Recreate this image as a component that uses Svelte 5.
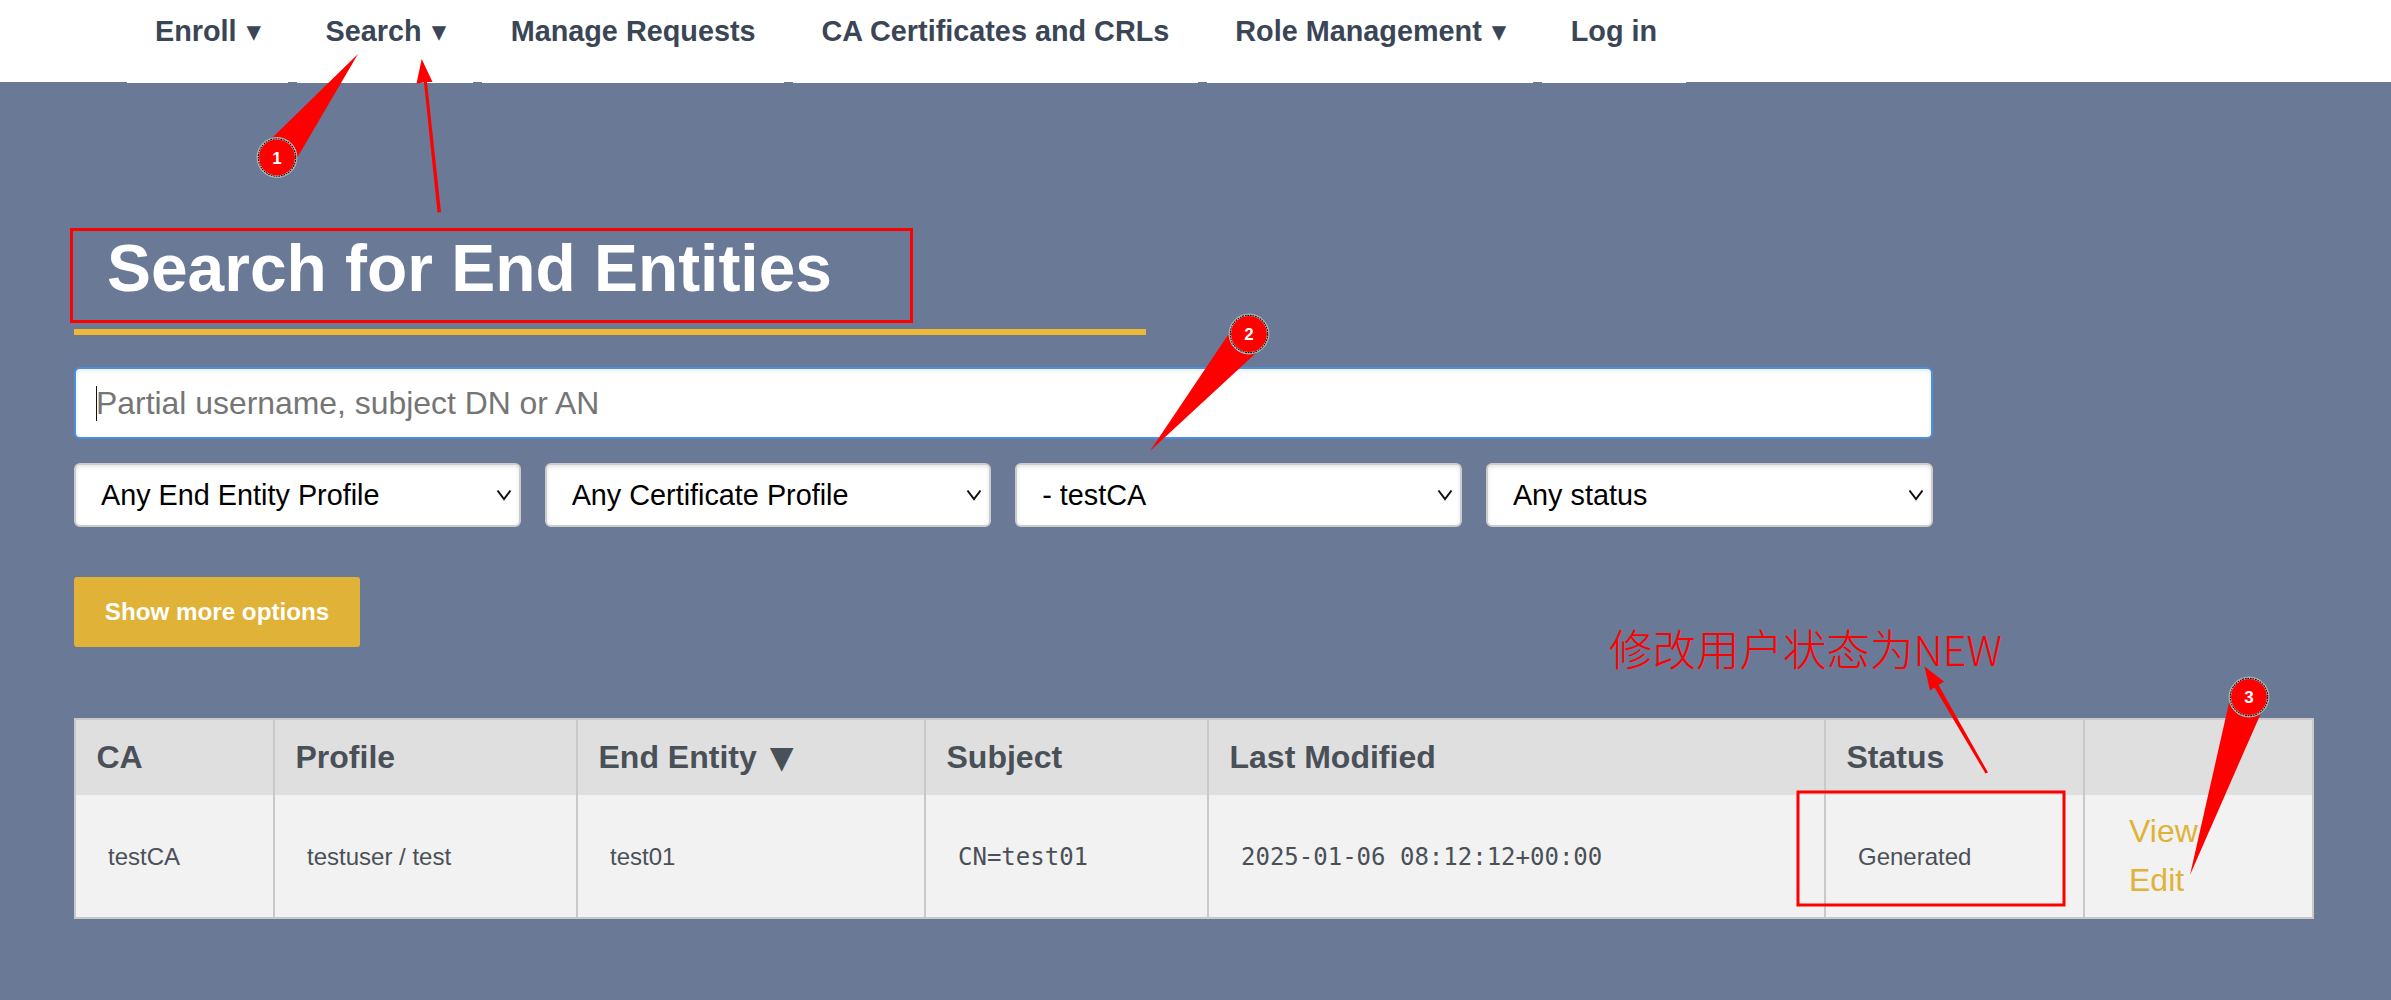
<script>
  const columns = [
    { label: 'CA', width: 199 },
    { label: 'Profile', width: 303 },
    { label: 'End Entity', sorted: true, width: 348 },
    { label: 'Subject', width: 283 },
    { label: 'Last Modified', width: 617 },
    { label: 'Status', width: 259 },
    { label: '', width: 229 }
  ];
  const nav = [
    { label: 'Enroll', menu: true },
    { label: 'Search', menu: true },
    { label: 'Manage Requests' },
    { label: 'CA Certificates and CRLs' },
    { label: 'Role Management', menu: true },
    { label: 'Log in' }
  ];
  const filters = [
    'Any End Entity Profile',
    'Any Certificate Profile',
    '- testCA',
    'Any status'
  ];
  const callouts = [
    { n: 1, cx: 277, cy: 157.5, tail: '358,54 272,138 297,158' },
    { n: 2, cx: 1249, cy: 334, tail: '1150,451 1228,335 1256,353' },
    { n: 3, cx: 2249, cy: 697, tail: '2190,875 2229,703 2261,713' }
  ];
</script>

<header class="top">
  <nav class="menu">
    {#each nav as item}
      <a class="menu-item" href="#top">{item.label}{#if item.menu}<span class="caret-down">▾</span>{/if}</a>
    {/each}
  </nav>
</header>

<main class="page">
  <h1 class="title">Search for End Entities</h1>

  <div class="search">
    <input class="query" type="text" placeholder="Partial username, subject DN or AN" />
    <span class="text-caret"></span>
  </div>

  <div class="filters">
    {#each filters as f}
      <div class="filter-wrap">
        <select class="filter"><option>{f}</option></select>
        <svg class="chevron" width="16" height="12" viewBox="0 0 16 12" aria-hidden="true">
          <path d="M1.5 1.5 L8 10 L14.5 1.5" fill="none" stroke="#111" stroke-width="2" />
        </svg>
      </div>
    {/each}
  </div>

  <button class="more" type="button">Show more options</button>

  <table class="results">
    <colgroup>
      {#each columns as c}
        <col style="width:{c.width}px" />
      {/each}
    </colgroup>
    <thead>
      <tr>
        {#each columns as c}
          <th>{c.label}{#if c.sorted}<span class="sort">▼</span>{/if}</th>
        {/each}
      </tr>
    </thead>
    <tbody>
      <tr>
        <td>testCA</td>
        <td>testuser / test</td>
        <td>test01</td>
        <td class="mono">CN=test01</td>
        <td class="mono">2025-01-06 08:12:12+00:00</td>
        <td>Generated</td>
        <td class="actions"><a href="#top">View</a><a href="#top">Edit</a></td>
      </tr>
    </tbody>
  </table>
</main>

<svg class="marks" width="2391" height="1000" viewBox="0 0 2391 1000" aria-hidden="true">
  <rect x="71.5" y="229.5" width="840" height="92" fill="none" stroke="#f00" stroke-width="3" />
  <rect x="1798" y="792" width="266" height="113" fill="none" stroke="#f00" stroke-width="3" />

  <polygon fill="#f00" points="421.7,59 416.5,83.5 424,82.5 437.5,212.5 441,212 427,82 432.5,82" />
  <polygon fill="#f00" points="1924.5,666.5 1930,690.5 1934.5,687.5 1985.5,773.5 1988,772.5 1938.5,685 1944,681.5" />

  {#each callouts as c}
    <polygon fill="#f00" points={c.tail} />
    <circle cx={c.cx} cy={c.cy} r="20" fill="#eee" stroke="#aaa" stroke-width="1" />
    <circle cx={c.cx} cy={c.cy} r="18.7" fill="none" stroke="#111" stroke-width="1.2" stroke-dasharray="2 0.6" />
    <circle cx={c.cx} cy={c.cy} r="18" fill="#f00" />
    <text class="num" x={c.cx} y={c.cy + 6}>{c.n}</text>
  {/each}

  <text class="note" x="1609" y="666">修改用户状态为<tspan class="note-latin">NEW</tspan></text>
</svg>

<style>
  :global(body) {
    margin: 0;
    background: #6a7995;
    font-family: "Liberation Sans", Arial, sans-serif;
  }

  .top {
    height: 82px;
    background: #fff;
  }

  .menu {
    display: flex;
    gap: 9px;
    margin-left: 126.5px;
  }

  .menu-item {
    height: 83px;
    padding: 15px 28.5px 0;
    box-sizing: border-box;
    background: #fff;
    color: #3a4556;
    font-size: 28.8px;
    font-weight: 700;
    line-height: 33px;
    text-decoration: none;
    white-space: nowrap;
  }

  .caret-down {
    display: inline-block;
    width: 23px;
    text-indent: 10px;
    font-family: "DejaVu Sans", sans-serif;
  }

  .page {
    padding: 150px 0 0 74px;
  }

  .title {
    width: 1039px;
    margin: 0;
    padding: 0 0 24px 33px;
    border-bottom: 6px solid #edb936;
    color: #fff;
    font-size: 65.9px;
    font-weight: 700;
    line-height: 73px;
  }

  .search {
    position: relative;
    width: 1858.5px;
    margin-top: 32px;
  }

  .query {
    display: block;
    width: 100%;
    height: 72px;
    box-sizing: border-box;
    padding: 0 20px;
    border: 2px solid #4a90e2;
    border-radius: 6px;
    background: #fff;
    box-shadow: inset 0 2px 4px rgba(0, 0, 0, 0.08);
    outline: none;
    font: 31.9px "Liberation Sans", Arial, sans-serif;
  }

  .text-caret {
    position: absolute;
    top: 19px;
    left: 21.5px;
    width: 1.5px;
    height: 35px;
    background: #111;
  }

  .filters {
    display: grid;
    grid-template-columns: repeat(4, 1fr);
    gap: 24px;
    width: 1858.5px;
    margin-top: 24px;
  }

  .filter-wrap {
    position: relative;
  }

  .filter {
    display: block;
    width: 100%;
    height: 64px;
    box-sizing: border-box;
    padding: 0 25px;
    border: 2px solid #ccc;
    border-radius: 6px;
    appearance: none;
    background: #fff;
    box-shadow: inset 0 2px 4px rgba(0, 0, 0, 0.1);
    color: #000;
    font: 28.8px "Liberation Sans", Arial, sans-serif;
  }

  .chevron {
    position: absolute;
    top: 26px;
    right: 9px;
    pointer-events: none;
  }

  .more {
    display: block;
    width: 286px;
    height: 70px;
    margin-top: 50px;
    padding: 0;
    border: 0;
    border-radius: 3px;
    background: #e0b238;
    color: #fff;
    font: 700 24.2px "Liberation Sans", Arial, sans-serif;
  }

  .results {
    width: 2238px;
    margin-top: 71px;
    border-collapse: collapse;
    table-layout: fixed;
    color: #4a5058;
  }

  th, td {
    border: 2px solid #c9c9c9;
    text-align: left;
  }

  th {
    height: 75px;
    padding: 0 20.5px;
    background: #dfdfdf;
    font-size: 32px;
    font-weight: 700;
  }

  .sort {
    margin-left: 13px;
    font-family: "DejaVu Sans", sans-serif;
    font-size: 31px;
    line-height: 1;
  }

  thead th {
    border-bottom: 0;
  }

  tbody td {
    border-top: 0;
  }

  td {
    height: 121px;
    padding: 1px 32px 0;
    background: #f2f2f2;
    font-size: 24px;
  }

  .mono {
    font-family: "DejaVu Sans Mono", "Liberation Mono", monospace;
  }

  td.actions {
    padding: 0 0 0 44px;
  }

  .actions a {
    display: block;
    color: #e0b238;
    font-size: 32px;
    line-height: 49px;
    text-decoration: none;
  }

  .marks {
    position: absolute;
    top: 0;
    left: 0;
    pointer-events: none;
  }

  .num {
    fill: #fff;
    font: 700 17px "Liberation Sans", Arial, sans-serif;
    text-anchor: middle;
  }

  .note {
    fill: #f00;
    font-family: "Noto Sans CJK SC", sans-serif;
    font-size: 43.5px;
    font-weight: 300;
  }

  .note-latin {
    font-size: 41.5px;
  }
</style>
